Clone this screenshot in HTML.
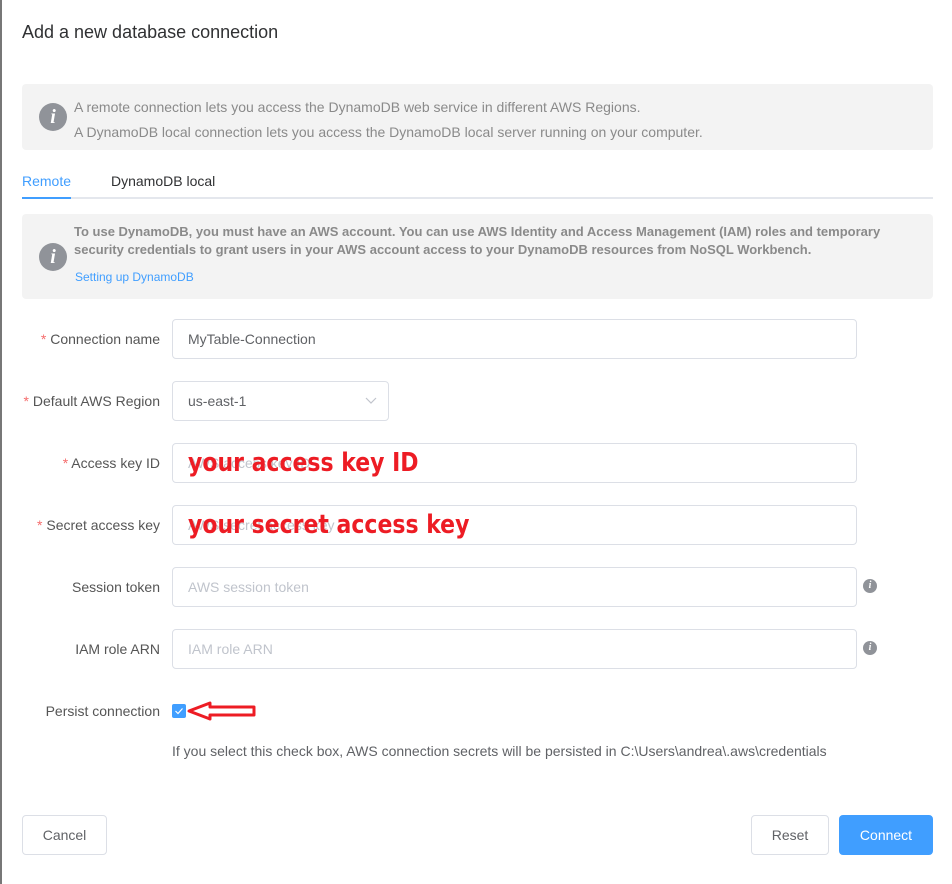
<!DOCTYPE html>
<html><head><meta charset="utf-8"><style>
*{box-sizing:border-box;margin:0;padding:0}
body{width:952px;height:884px;background:#fff;font-family:"Liberation Sans",Arial,sans-serif;position:relative;overflow:hidden;color:#333}
.a{position:absolute}
.lb{position:absolute;right:792px;font-size:14px;color:#555;white-space:nowrap}
.lb b{color:#f56c6c;font-weight:normal}
.in{position:absolute;left:172px;width:685px;height:40px;border:1px solid #dcdfe6;border-radius:4px;font-size:14px;padding-left:15px;line-height:38px;color:#c0c4cc}
.ii{position:absolute;width:14px;height:14px;border-radius:50%;background:#909399;color:#fff;font:italic bold 10px/14px "Liberation Serif",serif;text-align:center}
.big{position:absolute;width:28px;height:28px;border-radius:50%;background:#909399;color:#fff;font:italic bold 20px/28px "Liberation Serif",serif;text-align:center}
.red{position:absolute;left:188px;color:#ed1c24;font-weight:bold;font-size:26px;font-family:"DejaVu Sans Condensed","Liberation Sans",sans-serif;transform:scaleX(0.94);transform-origin:left}
.btn{position:absolute;top:815px;height:40px;border:1px solid #dcdfe6;border-radius:4px;font-size:14px;text-align:center;line-height:38px;color:#606266;background:#fff}
</style></head><body>
<div class="a" style="left:0;top:0;width:2px;height:884px;background:#777"></div>
<div class="a" style="left:22px;top:22px;font-size:18px;color:#303133">Add a new database connection</div>
<div class="a" style="left:22px;top:84px;width:911px;height:66px;background:#f3f3f3;border-radius:4px"></div>
<div class="big" style="left:39px;top:103px">i</div>
<div class="a" style="left:74px;top:99px;font-size:14px;color:#8a8a8a">A remote connection lets you access the DynamoDB web service in different AWS Regions.</div>
<div class="a" style="left:74px;top:124px;font-size:14px;color:#8a8a8a">A DynamoDB local connection lets you access the DynamoDB local server running on your computer.</div>
<div class="a" style="left:22px;top:173px;font-size:14px;color:#409eff">Remote</div>
<div class="a" style="left:111px;top:173px;font-size:14px;color:#303133">DynamoDB local</div>
<div class="a" style="left:22px;top:197px;width:911px;height:2px;background:#e4e7ed"></div>
<div class="a" style="left:22px;top:197px;width:49px;height:2px;background:#409eff"></div>
<div class="a" style="left:22px;top:214px;width:911px;height:85px;background:#f3f3f3;border-radius:4px"></div>
<div class="big" style="left:39px;top:243px">i</div>
<div class="a" style="left:74px;top:223px;font-size:13px;font-weight:bold;color:#8a8a8a;line-height:18px;width:850px">To use DynamoDB, you must have an AWS account. You can use AWS Identity and Access Management (IAM) roles and temporary security credentials to grant users in your AWS account access to your DynamoDB resources from NoSQL Workbench.</div>
<div class="a" style="left:75px;top:270px;font-size:12px;color:#409eff">Setting up DynamoDB</div>

<div class="lb" style="top:331px"><b>*</b> Connection name</div>
<div class="in" style="top:319px;color:#606266">MyTable-Connection</div>
<div class="lb" style="top:393px"><b>*</b> Default AWS Region</div>
<div class="in" style="top:381px;width:217px;color:#606266">us-east-1<svg class="a" style="left:192px;top:15px" width="12" height="8" viewBox="0 0 12 8"><path d="M1 1l5 5 5-5" fill="none" stroke="#c0c4cc" stroke-width="1.2"/></svg></div>
<div class="lb" style="top:455px"><b>*</b> Access key ID</div>
<div class="in" style="top:443px">AWS access key ID</div>
<div class="red" style="top:448px">your access key ID</div>
<div class="lb" style="top:517px"><b>*</b> Secret access key</div>
<div class="in" style="top:505px">AWS secret access key</div>
<div class="red" style="top:510px">your secret access key</div>
<div class="lb" style="top:579px">Session token</div>
<div class="in" style="top:567px">AWS session token</div>
<div class="ii" style="left:863px;top:579px">i</div>
<div class="lb" style="top:641px">IAM role ARN</div>
<div class="in" style="top:629px">IAM role ARN</div>
<div class="ii" style="left:863px;top:641px">i</div>
<div class="lb" style="top:703px">Persist connection</div>
<div class="a" style="left:172px;top:704px;width:14px;height:14px;background:#409eff;border-radius:2px"><svg width="14" height="14"><path d="M3.5 7l2.5 2.5 4.5-5" fill="none" stroke="#fff" stroke-width="1.2"/></svg></div>
<svg class="a" style="left:186px;top:700px" width="72" height="22" viewBox="0 0 72 22"><path d="M3 11l21-8v4h44v8h-44v4z" fill="none" stroke="#ed1c24" stroke-width="3" stroke-linejoin="round"/></svg>
<div class="a" style="left:172px;top:743px;font-size:14px;color:#606266">If you select this check box, AWS connection secrets will be persisted in C:\Users\andrea\.aws\credentials</div>
<div class="btn" style="left:22px;width:85px">Cancel</div>
<div class="btn" style="left:751px;width:78px">Reset</div>
<div class="btn" style="left:839px;width:94px;background:#409eff;border-color:#409eff;color:#fff">Connect</div>
</body></html>
